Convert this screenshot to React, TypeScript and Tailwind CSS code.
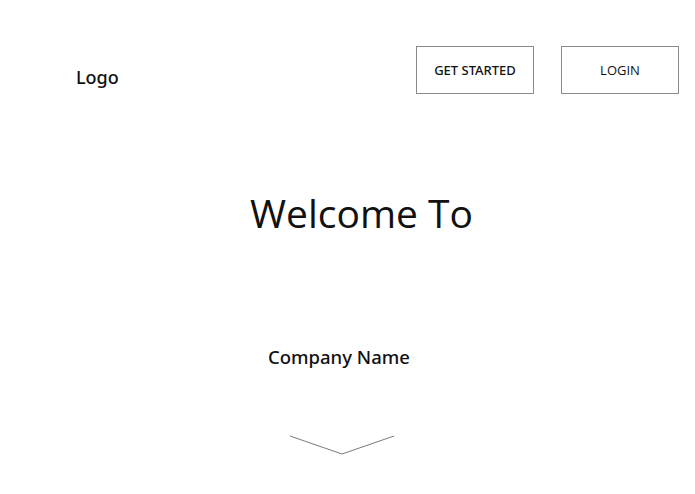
export default function App() {
  return (
    <div className="w-[695px] h-[494px] bg-white text-black font-['Open_Sans',sans-serif] flex flex-col">
      <header className="flex items-start pt-[46px] pl-[76px] pr-[16px]">
        <div className="mt-[17px] font-['Noto_Sans',sans-serif] text-[18px] font-medium leading-[28px] text-[#111]">Logo</div>
        <div className="ml-auto flex gap-[27px]">
          <button className="w-[118px] h-[48px] border border-[#8a8a8a] font-['Noto_Sans',sans-serif] text-[13px] font-medium pt-[1px] text-[#111]">GET STARTED</button>
          <button className="w-[118px] h-[48px] border border-[#8a8a8a] text-[13px] pt-[1px] text-[#111]">LOGIN</button>
        </div>
      </header>
      <h1 className="mt-[92px] text-center pl-[28px] text-[39px] leading-[54px] text-[#111]">Welcome To</h1>
      <div className="mt-[103px] pl-[268px] font-['Noto_Sans',sans-serif] text-[18.5px] font-medium leading-[28px] text-[#111]">Company Name</div>
      <div className="mt-[64px] pl-[289px]">
        <svg width="106" height="21" viewBox="0 0 106 21">
          <polyline points="1,1 53,19 105,1" fill="none" stroke="#7a7a7a" strokeWidth="1" />
        </svg>
      </div>
    </div>
  );
}
